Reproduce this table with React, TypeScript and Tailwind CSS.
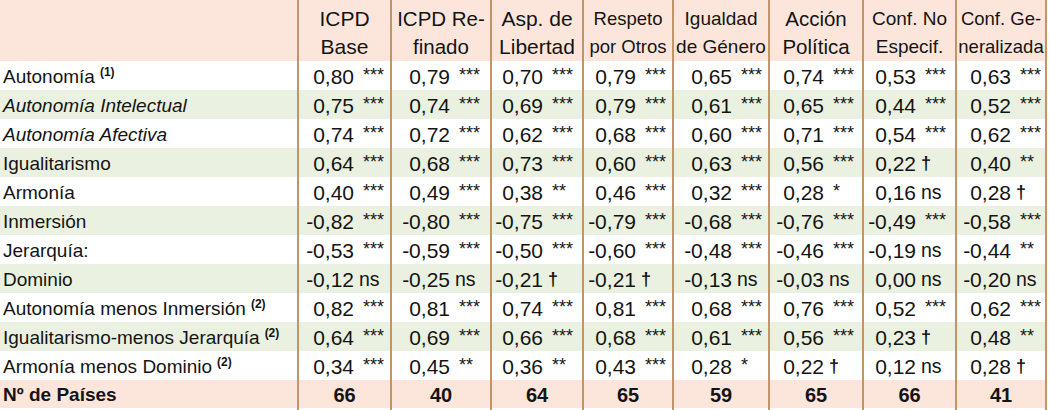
import React from "react";

type Cell = [string, string];

type Row = {
  label: string;
  sup?: string;
  italic?: boolean;
  vals: Cell[];
};

const rows: Row[] = [
  { label: "Autonomía", sup: "(1)", vals: [["0,80", "***"], ["0,79", "***"], ["0,70", "***"], ["0,79", "***"], ["0,65", "***"], ["0,74", "***"], ["0,53", "***"], ["0,63", "***"]] },
  { label: "Autonomía Intelectual", italic: true, vals: [["0,75", "***"], ["0,74", "***"], ["0,69", "***"], ["0,79", "***"], ["0,61", "***"], ["0,65", "***"], ["0,44", "***"], ["0,52", "***"]] },
  { label: "Autonomía Afectiva", italic: true, vals: [["0,74", "***"], ["0,72", "***"], ["0,62", "***"], ["0,68", "***"], ["0,60", "***"], ["0,71", "***"], ["0,54", "***"], ["0,62", "***"]] },
  { label: "Igualitarismo", vals: [["0,64", "***"], ["0,68", "***"], ["0,73", "***"], ["0,60", "***"], ["0,63", "***"], ["0,56", "***"], ["0,22", "†"], ["0,40", "**"]] },
  { label: "Armonía", vals: [["0,40", "***"], ["0,49", "***"], ["0,38", "**"], ["0,46", "***"], ["0,32", "***"], ["0,28", "*"], ["0,16", "ns"], ["0,28", "†"]] },
  { label: "Inmersión", vals: [["-0,82", "***"], ["-0,80", "***"], ["-0,75", "***"], ["-0,79", "***"], ["-0,68", "***"], ["-0,76", "***"], ["-0,49", "***"], ["-0,58", "***"]] },
  { label: "Jerarquía:", vals: [["-0,53", "***"], ["-0,59", "***"], ["-0,50", "***"], ["-0,60", "***"], ["-0,48", "***"], ["-0,46", "***"], ["-0,19", "ns"], ["-0,44", "**"]] },
  { label: "Dominio", vals: [["-0,12", "ns"], ["-0,25", "ns"], ["-0,21", "†"], ["-0,21", "†"], ["-0,13", "ns"], ["-0,03", "ns"], ["0,00", "ns"], ["-0,20", "ns"]] },
  { label: "Autonomía menos Inmersión", sup: "(2)", vals: [["0,82", "***"], ["0,81", "***"], ["0,74", "***"], ["0,81", "***"], ["0,68", "***"], ["0,76", "***"], ["0,52", "***"], ["0,62", "***"]] },
  { label: "Igualitarismo-menos Jerarquía", sup: "(2)", vals: [["0,64", "***"], ["0,69", "***"], ["0,66", "***"], ["0,68", "***"], ["0,61", "***"], ["0,56", "***"], ["0,23", "†"], ["0,48", "**"]] },
  { label: "Armonía menos Dominio", sup: "(2)", vals: [["0,34", "***"], ["0,45", "**"], ["0,36", "**"], ["0,43", "***"], ["0,28", "*"], ["0,22", "†"], ["0,12", "ns"], ["0,28", "†"]] },
];

const headers = [
  { a: "ICPD", b: "Base", size: "text-[21px]" },
  { a: "ICPD Re-", b: "finado", size: "text-[20.5px]" },
  { a: "Asp. de", b: "Libertad", size: "text-[21px]" },
  { a: "Respeto", b: "por Otros", size: "text-[18.5px]" },
  { a: "Igualdad", b: "de Género", size: "text-[19px]" },
  { a: "Acción", b: "Política", size: "text-[20.5px]" },
  { a: "Conf. No", b: "Especif.", size: "text-[19px]" },
  { a: "Conf. Ge-", b: "neralizada", size: "text-[18.5px]" },
];

const numWidths = ["w-[55px]", "w-[58px]", "w-[51px]", "w-[52px]", "w-[58px]", "w-[54px]", "w-[52px]", "w-[54px]"];
const countries = ["66", "40", "64", "65", "59", "65", "66", "41"];

const grid = "grid grid-cols-[297px_93px_100px_92px_90px_96px_94px_93px_92px] w-[1047px]";
const border = "border-l-2 border-[#c39466]";

function Sig({ s }: { s: string }) {
  if (s === "ns") return <span className="ml-[5px] text-[19.5px]">ns</span>;
  if (s === "†") return <span className="ml-[5px] text-[18px] font-bold">†</span>;
  return <span className="ml-[9px] text-[18px] self-start mt-[5px] leading-[18px]">{s}</span>;
}

export default function App() {
  return (
    <div className="w-[1050px] h-[410px] bg-white text-[#141414]" style={{ fontFamily: '"Liberation Sans", Arial, sans-serif' }}>
      <div className={`${grid} h-[61px] bg-[#fce6db]`}>
        <div />
        {headers.map((h, i) => (
          <div
            key={h.a}
            className={`${border} ${i === 7 ? "border-r-2" : ""} ${h.size} flex flex-col items-center justify-center pt-[4px] leading-[28px] whitespace-nowrap`}
          >
            <span>{h.a}</span>
            <span>{h.b}</span>
          </div>
        ))}
      </div>

      {rows.map((r, ri) => (
        <div key={r.label} className={`${grid} h-[29px] ${ri % 2 === 1 ? "bg-[#ebf1e0]" : "bg-white"}`}>
          <div className={`pl-[3px] flex items-center text-[19px] whitespace-nowrap ${r.italic ? "italic" : ""}`}>
            {r.label}
            {r.sup && <sup className="ml-[5px] text-[12px] font-bold -top-[5px]">{r.sup}</sup>}
          </div>
          {r.vals.map(([n, s], ci) => (
            <div key={ci} className={`${border} ${ci === 7 ? "border-r-2" : ""} flex items-center whitespace-nowrap`}>
              <span className={`${numWidths[ci]} text-right text-[21px] shrink-0`}>{n}</span>
              <Sig s={s} />
            </div>
          ))}
        </div>
      ))}

      <div className={`${grid} h-[28px] bg-[#fce6db] font-bold`}>
        <div className="pl-[3px] flex items-center text-[19px]">Nº de Países</div>
        {countries.map((c, i) => (
          <div key={i} className={`${border} ${i === 7 ? "border-r-2" : ""} flex items-center justify-center text-[20px]`}>
            {c}
          </div>
        ))}
      </div>
    </div>
  );
}
